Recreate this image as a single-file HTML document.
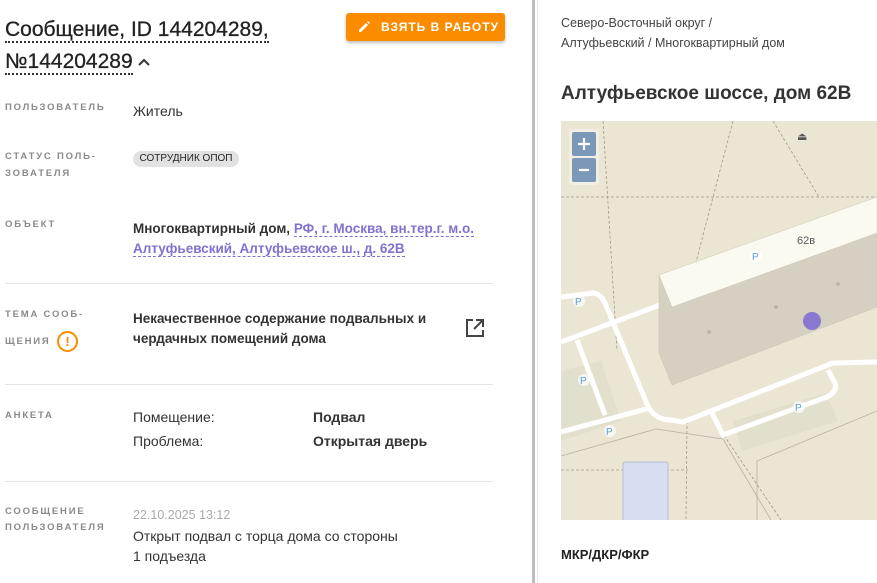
<!DOCTYPE html>
<html><head><meta charset="utf-8"><style>
*{margin:0;padding:0;box-sizing:border-box}
body{width:877px;height:583px;overflow:hidden;background:#fff;font-family:"Liberation Sans","Noto Sans CJK SC",sans-serif;color:#333;position:relative}
.a{position:absolute;white-space:nowrap}
.t{font-size:21px;color:#222;border-bottom:2px dotted #333;line-height:23px;-webkit-text-stroke:0.3px #222}
.lab{font-size:9.5px;letter-spacing:1.8px;color:#8a8a8a;font-weight:bold;line-height:18px}
.v{font-size:14px;color:#333}
.b{font-weight:bold;color:#333;font-size:13.5px}
.hr{position:absolute;left:5px;width:488px;height:1px;background:#e3e3e3}
.lnk{color:#8470d0;border-bottom:1px dashed #8470d0}
</style></head><body>
<div class="a t" style="left:5px;top:18px">Сообщение, ID 144204289,</div>
<div class="a t" style="left:5px;top:50px">№144204289</div>
<svg class="a" style="left:136px;top:56px" width="16" height="12"><path d="M3 9 L8 4 L13 9" stroke="#333" stroke-width="2" fill="none"/></svg>
<div class="a" style="left:346px;top:13px;width:159px;height:28px;background:#fb8c00;border-radius:3px;box-shadow:0 2px 3px rgba(0,0,0,.25);color:#fff;font-weight:bold;font-size:12px;letter-spacing:1px;line-height:28px;padding-left:35px">ВЗЯТЬ В РАБОТУ</div>
<svg class="a" style="left:357px;top:20px" width="14" height="14"><path d="M2 12 L2 10 L9 3 L11 5 L4 12 Z" fill="#fff"/><path d="M10 2 L11 1 L13 3 L12 4Z" fill="#fff"/></svg>

<div class="a lab" style="left:5px;top:99px">ПОЛЬЗОВАТЕЛЬ</div>
<div class="a v" style="left:133px;top:103px">Житель</div>
<div class="a lab" style="left:5px;top:148px;line-height:17px">СТАТУС ПОЛЬ-<br>ЗОВАТЕЛЯ</div>
<div class="a" style="left:133px;top:151px;width:106px;height:16px;background:#e2e2e2;border-radius:8px;font-size:10px;color:#222;text-align:center;line-height:16px">СОТРУДНИК ОПОП</div>
<div class="a lab" style="left:5px;top:216px">ОБЪЕКТ</div>
<div class="a b" style="left:133px;top:219px;line-height:20px">Многоквартирный дом, <span class="lnk">РФ, г. Москва, вн.тер.г. м.о.</span><br><span class="lnk">Алтуфьевский, Алтуфьевское ш., д. 62В</span></div>
<div class="hr" style="top:283px"></div>
<div class="a lab" style="left:5px;top:306px">ТЕМА СООБ-</div>
<div class="a lab" style="left:5px;top:333px">ЩЕНИЯ</div>
<div class="a" style="left:57px;top:331px;width:21px;height:21px;border:2px solid #fb8c00;border-radius:50%;color:#fb8c00;font-weight:bold;font-size:13px;text-align:center;line-height:17px">!</div>
<div class="a b" style="left:133px;top:309px;line-height:20px">Некачественное содержание подвальных и<br>чердачных помещений дома</div>
<svg class="a" style="left:465px;top:318px" width="20" height="20"><path d="M8 2H2V18H18V12" stroke="#444" stroke-width="2" fill="none"/><path d="M11 2H18V9M18 2L9 11" stroke="#444" stroke-width="2" fill="none"/></svg>
<div class="hr" style="top:384px"></div>
<div class="a lab" style="left:5px;top:407px">АНКЕТА</div>
<div class="a v" style="left:133px;top:409px">Помещение:</div>
<div class="a b" style="left:313px;top:409px;font-size:14px">Подвал</div>
<div class="a v" style="left:133px;top:433px">Проблема:</div>
<div class="a b" style="left:313px;top:433px;font-size:14px">Открытая дверь</div>
<div class="hr" style="top:481px"></div>
<div class="a lab" style="left:5px;top:504px;line-height:16px">СООБЩЕНИЕ<br>ПОЛЬЗОВАТЕЛЯ</div>
<div class="a" style="left:133px;top:508px;font-size:12.5px;color:#aaa">22.10.2025 13:12</div>
<div class="a v" style="left:133px;top:526px;line-height:20px">Открыт подвал с торца дома со стороны<br>1 подъезда</div>

<div class="a" style="left:532px;top:0;width:3px;height:583px;background:#bdbdbd"></div>
<div class="a" style="left:537px;top:0;width:1px;height:583px;background:#e6e6e6"></div>

<div class="a" style="left:561px;top:13px;font-size:12.5px;color:#444;line-height:20px">Северо-Восточный округ /<br>Алтуфьевский / Многоквартирный дом</div>
<div class="a" style="left:561px;top:83px;font-size:19px;font-weight:bold;color:#333">Алтуфьевское шоссе, дом 62В</div>

<svg class="a" style="left:561px;top:121px" width="316" height="399" viewBox="0 0 316 399">
<rect width="316" height="399" fill="#ebe5d3"/>
<g stroke="#a09a8c" stroke-width="0.8" stroke-dasharray="3 2" fill="none">
<path d="M0 76 H316"/><path d="M42 0 L56 230"/><path d="M172 0 L130 160"/><path d="M212 0 L258 76"/>
<path d="M0 349 H127"/><path d="M126 300 L125 399"/><path d="M160 310 L220 399"/>
</g>
<path d="M0 335 L95 308 L162 318 L210 399" stroke="#b5b0a5" stroke-width="0.8" fill="none"/>
<path d="M196 399 V340 L316 290" stroke="#b5b0a5" stroke-width="0.8" fill="none"/>
<path d="M0 250 L40 240 L60 300 L0 320Z" fill="#e2e0cc"/>
<path d="M172 300 L265 272 L277 300 L181 330Z" fill="#e2e0cc"/>
<g stroke="#fff" stroke-width="5" fill="none" stroke-linejoin="round">
<path d="M0 221 L99 184"/><path d="M0 176 L32 172 Q40 173 44 182 L86 283 Q93 299 110 299 L122 301 L272 242 L316 241"/>
<path d="M16 219 L44 294"/><path d="M0 311 L89 287"/>
<path d="M151 292 L162 314 L266 276 Q277 270 274 262 L267 249"/>
</g>
<polygon points="98,154 111,186 316,112 316,186 111,264 98,232" fill="#d6d0c2" stroke="#c9c3b4" stroke-width="0.5"/>
<polygon points="98,154 316,76 316,112 111,186" fill="#fbfaf1" stroke="#cfc9b9" stroke-width="0.5"/>
<text x="236" y="123" font-size="11" fill="#555" font-family="Liberation Sans,sans-serif">62в</text>
<circle cx="251" cy="200" r="9" fill="#8a78d0"/>
<circle cx="277" cy="163" r="2" fill="#bdb7a8"/><circle cx="215" cy="186" r="2" fill="#bdb7a8"/><circle cx="148" cy="211" r="2" fill="#bdb7a8"/>
<g font-size="10" fill="#5aa0e0" font-family="Liberation Sans,sans-serif">
<circle cx="195" cy="135" r="6" fill="#fff" opacity=".7"/><text x="191" y="139">P</text>
<circle cx="18" cy="180" r="6" fill="#fff" opacity=".7"/><text x="14" y="184">P</text>
<circle cx="23" cy="259" r="6" fill="#fff" opacity=".7"/><text x="19" y="263">P</text>
<circle cx="49" cy="310" r="6" fill="#fff" opacity=".7"/><text x="45" y="314">P</text>
<circle cx="238" cy="286" r="6" fill="#fff" opacity=".7"/><text x="234" y="290">P</text>
</g>
<rect x="62" y="341" width="45" height="59" rx="2" fill="#d8def2" stroke="#b8bccc"/>
<text x="236" y="19" font-size="11" fill="#555">⏏</text>
<rect x="8" y="8" width="30" height="56" rx="3" fill="#f4f2ea" opacity=".7"/>
<rect x="11" y="11" width="24" height="24" rx="2" fill="#7b98b9"/>
<rect x="11" y="37" width="24" height="24" rx="2" fill="#7b98b9"/>
<path d="M23 17V29M17 23H29" stroke="#fff" stroke-width="2.2"/><path d="M18 49H28" stroke="#fff" stroke-width="2.2"/>
</svg>
<div class="a" style="left:561px;top:547px;font-size:13px;font-weight:bold;color:#222">МКР/ДКР/ФКР</div>
</body></html>
